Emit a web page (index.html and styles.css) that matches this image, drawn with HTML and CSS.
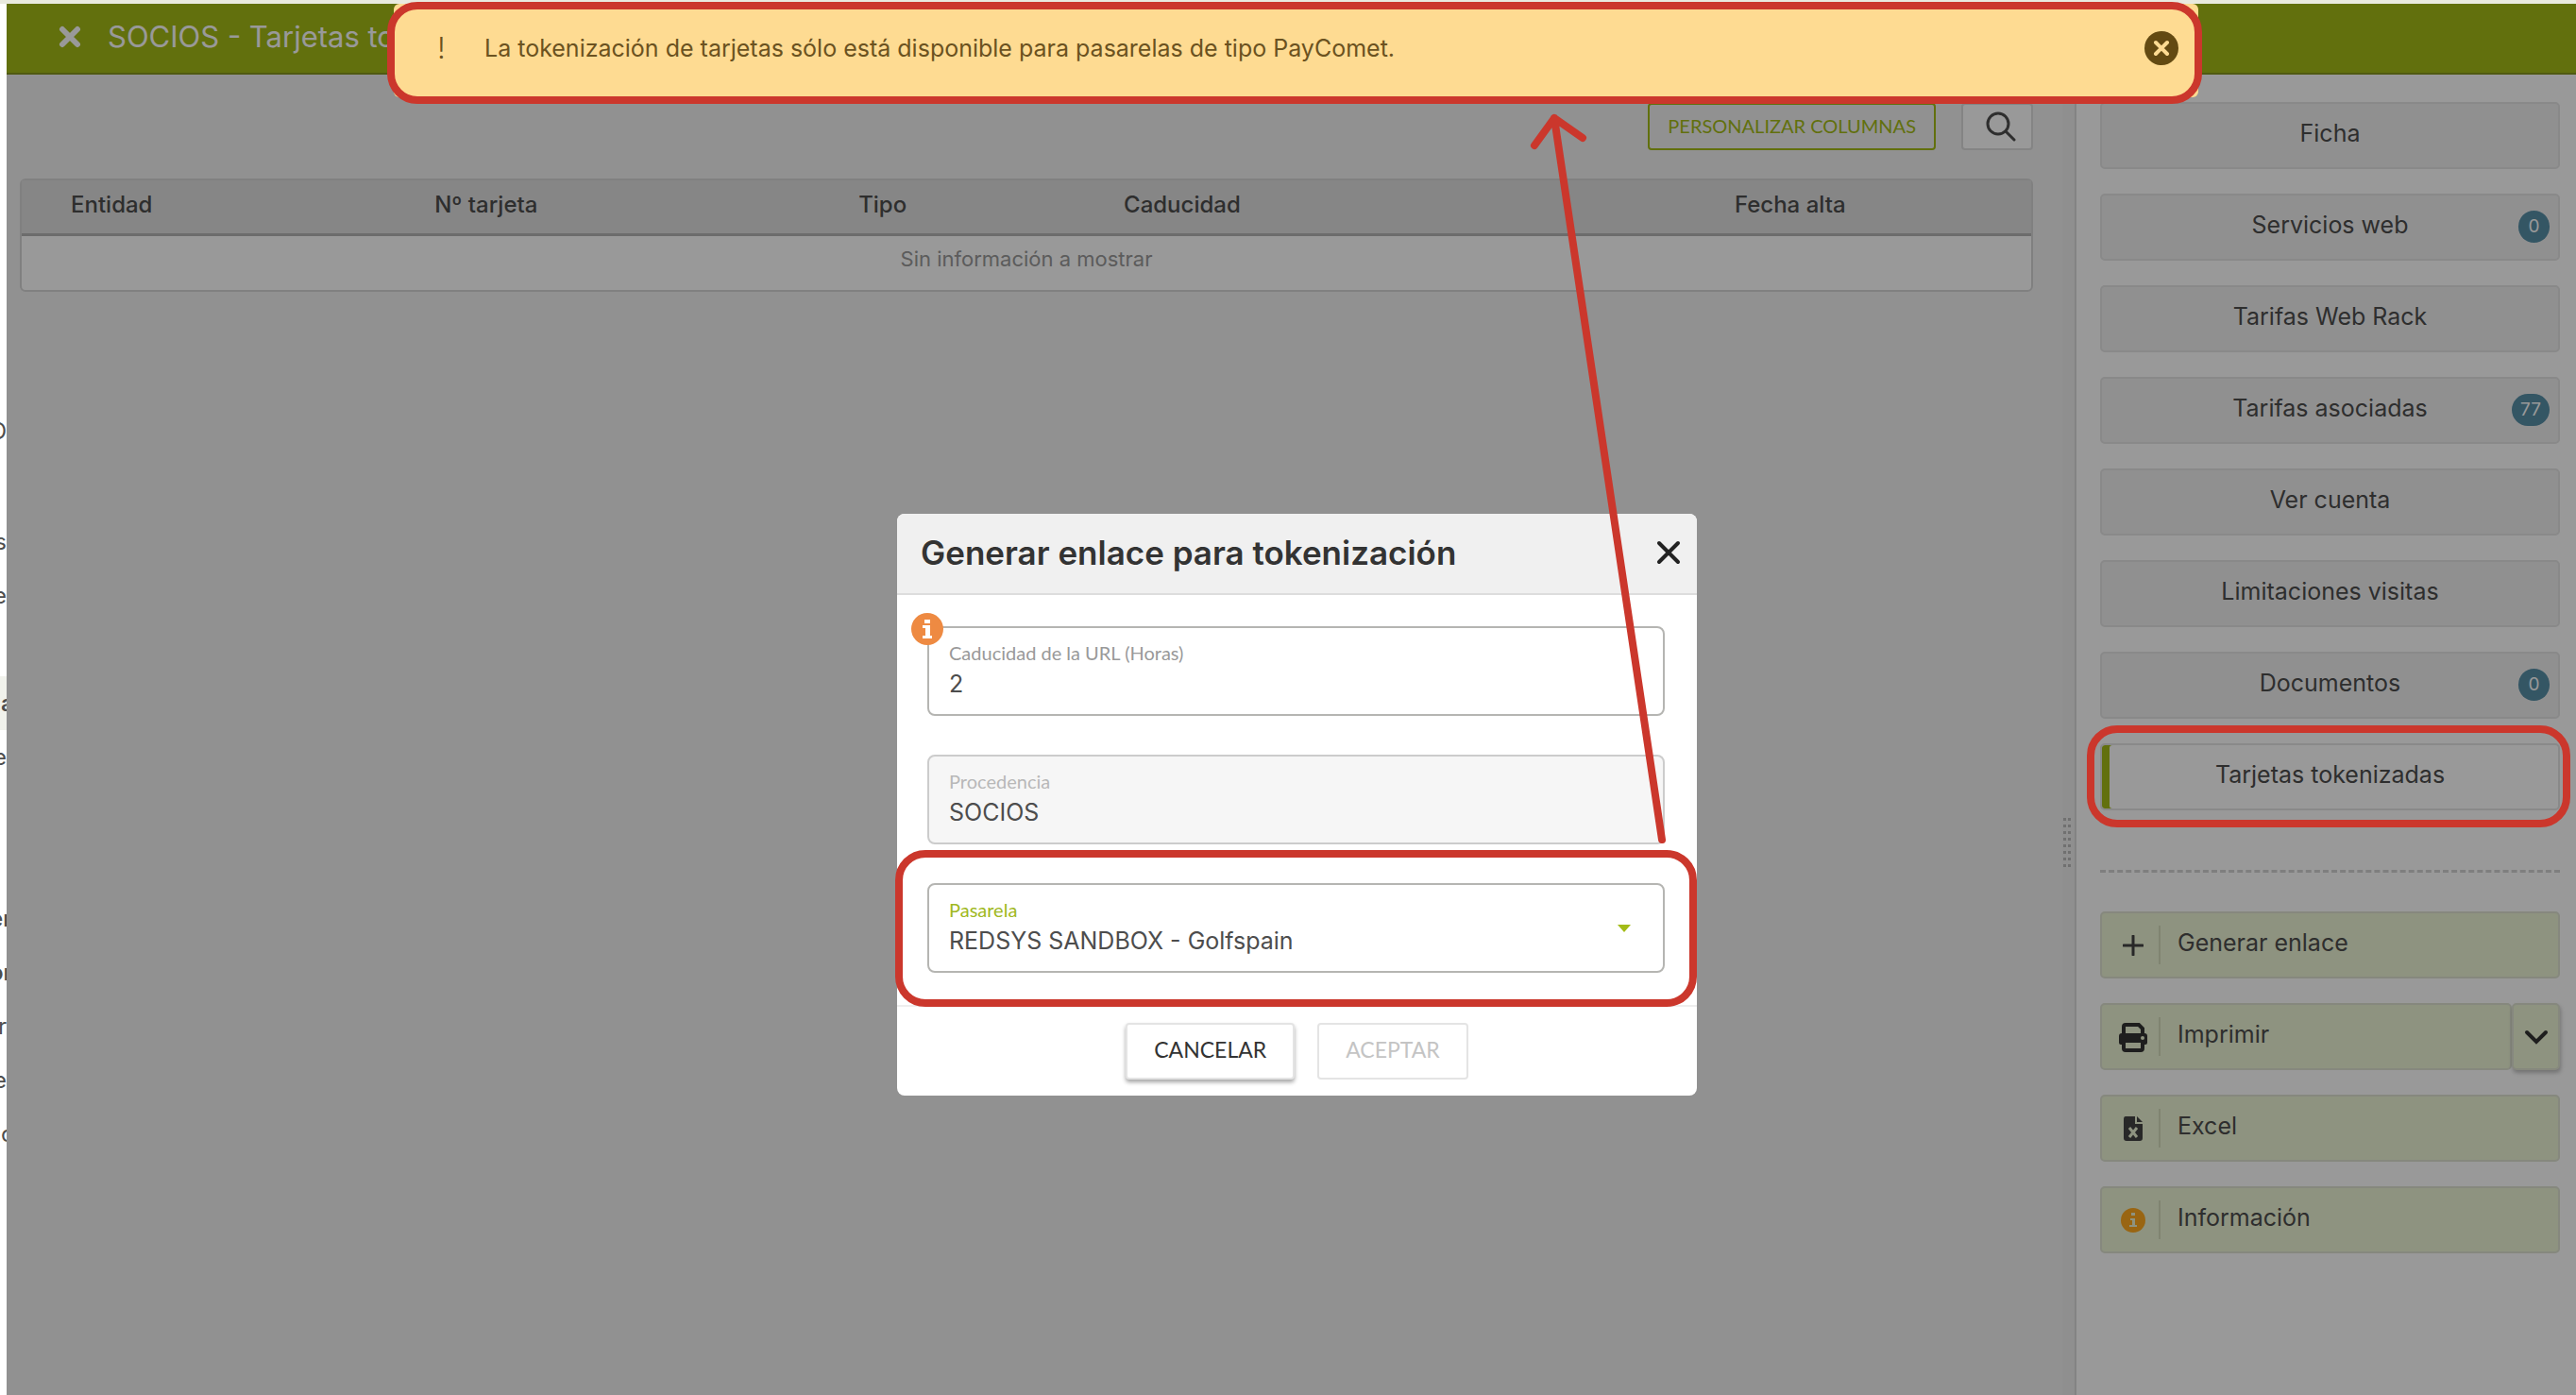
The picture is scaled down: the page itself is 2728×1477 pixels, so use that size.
FILE: index.html
```html
<!DOCTYPE html>
<html lang="es">
<head>
    <meta charset="utf-8">
    <title>SOCIOS - Tarjetas tokenizadas</title>
    <link rel="stylesheet" href="styles.css">
</head>
<body>
    <!-- menú lateral, casi todo queda tapado -->
    <div class="menu">
        <div class="menu-title">O</div>
        <div class="menu-item">s</div>
        <div class="menu-item">e</div>
        <div class="menu-item"></div>
        <div class="menu-item start active">a</div>
        <div class="menu-item">e</div>
        <div class="menu-item"></div>
        <div class="menu-item"></div>
        <div class="menu-item cut bold">er</div>
        <div class="menu-item cut bold">or</div>
        <div class="menu-item">r</div>
        <div class="menu-item">e</div>
        <div class="menu-item start">c</div>
    </div>

    <div class="app">
        <header class="header">
            <button type="button" class="icon-btn" aria-label="Cerrar">
                <svg width="24" height="24" viewBox="0 0 24 24"><path d="M4 4L20 20M20 4L4 20" stroke="#fff" stroke-width="6" stroke-linecap="round"/></svg>
            </button>
            <h1>SOCIOS - Tarjetas tokenizadas</h1>
        </header>

        <div class="content">
            <main class="main">
                <div class="toolbar">
                    <button type="button" class="btn-columns">PERSONALIZAR COLUMNAS</button>
                    <button type="button" class="btn-search" aria-label="Buscar">
                        <svg width="32" height="32" viewBox="0 0 32 32" fill="none" stroke="#4d4d4d" stroke-width="3" stroke-linecap="round"><circle cx="13" cy="13" r="11"/><path d="M21 21L30 30"/></svg>
                    </button>
                </div>
                <table class="table">
                    <thead>
                        <tr>
                            <th class="c-entidad">Entidad</th>
                            <th class="c-tarjeta">Nº tarjeta</th>
                            <th class="c-tipo">Tipo</th>
                            <th class="c-caducidad">Caducidad</th>
                            <th>Fecha alta</th>
                        </tr>
                    </thead>
                    <tbody>
                        <tr><td colspan="5">Sin información a mostrar</td></tr>
                    </tbody>
                </table>
            </main>

            <div class="splitter"><div class="grip"></div></div>

            <aside class="panel">
                <nav class="tabs">
                    <button type="button" class="tab">Ficha</button>
                    <button type="button" class="tab">Servicios web<span class="badge">0</span></button>
                    <button type="button" class="tab">Tarifas Web Rack</button>
                    <button type="button" class="tab">Tarifas asociadas<span class="badge">77</span></button>
                    <button type="button" class="tab">Ver cuenta</button>
                    <button type="button" class="tab">Limitaciones visitas</button>
                    <button type="button" class="tab">Documentos<span class="badge">0</span></button>
                    <button type="button" class="tab selected">Tarjetas tokenizadas</button>
                </nav>
                <hr class="separator">
                <div class="actions">
                    <button type="button" class="action">
                        <span class="action-icon"><svg width="22" height="22" viewBox="0 0 22 22"><path d="M11 1V21M1 11H21" stroke="#444" stroke-width="3" stroke-linecap="round"/></svg></span>
                        <span class="action-text">Generar enlace</span>
                    </button>
                    <div class="split">
                        <button type="button" class="action">
                            <span class="action-icon"><svg width="32" height="32" viewBox="0 0 32 32"><path d="M6 12V5Q6 3 8 3H22L26 7V12" fill="none" stroke="#333" stroke-width="4"/><path d="M4 12H28Q31 12 31 15V22Q31 24 29 24H3Q1 24 1 22V15Q1 12 4 12Z" fill="#333"/><path d="M6 20H26V28Q26 30 24 30H8Q6 30 6 28Z" fill="#edf5d5" stroke="#333" stroke-width="4"/><circle cx="26" cy="17" r="2" fill="#edf5d5"/></svg></span>
                            <span class="action-text">Imprimir</span>
                        </button>
                        <button type="button" class="action more" aria-label="Más opciones">
                            <svg width="26" height="16" viewBox="0 0 26 16"><path d="M3 3L13 13L23 3" fill="none" stroke="#333" stroke-width="4" stroke-linecap="round"/></svg>
                        </button>
                    </div>
                    <button type="button" class="action">
                        <span class="action-icon"><svg width="22" height="28" viewBox="0 0 22 28"><path d="M3 1H13V9H21V24Q21 27 18 27H4Q1 27 1 24V4Q1 1 3 1Z" fill="#444"/><path d="M15 1L21 7H15Z" fill="#444"/><path d="M7 13L15 23M15 13L7 23" stroke="#edf5d5" stroke-width="3"/></svg></span>
                        <span class="action-text">Excel</span>
                    </button>
                    <button type="button" class="action">
                        <span class="action-icon"><svg width="28" height="28" viewBox="0 0 28 28"><circle cx="14" cy="14" r="13" fill="#ffa81f"/><path d="M12 6H16V9H12ZM11 12H16V19H18V21H10V19H13V14H11Z" fill="#edf5d5"/></svg></span>
                        <span class="action-text">Información</span>
                    </button>
                </div>
            </aside>
        </div>
        <div class="overlay"></div>
    </div>

    <div class="alert" role="alert">
        <span class="alert-mark">!</span>
        <span class="alert-text">La tokenización de tarjetas sólo está disponible para pasarelas de tipo PayComet.</span>
        <button type="button" class="icon-btn" aria-label="Cerrar aviso">
            <svg width="36" height="36" viewBox="0 0 36 36"><circle cx="18" cy="18" r="18" fill="#634a12"/><path d="M12 12L24 24M24 12L12 24" stroke="#fedb92" stroke-width="4" stroke-linecap="round"/></svg>
        </button>
    </div>

    <form class="modal">
        <div class="modal-header">
            <h2>Generar enlace para tokenización</h2>
            <button type="button" class="icon-btn" aria-label="Cerrar ventana">
                <svg width="26" height="26" viewBox="0 0 26 26"><path d="M3 3L23 23M23 3L3 23" stroke="#222" stroke-width="4" stroke-linecap="round"/></svg>
            </button>
        </div>
        <div class="modal-body">
            <div class="field">
                <svg class="info" width="34" height="34" viewBox="0 0 34 34"><circle cx="17" cy="17" r="17" fill="#ee8a42"/><path d="M14 7H20V11H14ZM12 13H20V24H22V27H12V24H15V16H12Z" fill="#fff"/></svg>
                <label for="caducidad">Caducidad de la URL (Horas)</label>
                <input type="text" id="caducidad" name="caducidad" value="2">
            </div>
            <div class="field disabled">
                <label for="procedencia">Procedencia</label>
                <input type="text" id="procedencia" name="procedencia" value="SOCIOS" disabled>
            </div>
            <div class="field pasarela">
                <label for="pasarela">Pasarela</label>
                <select id="pasarela" name="pasarela">
                    <option>REDSYS SANDBOX - Golfspain</option>
                </select>
            </div>
        </div>
        <div class="modal-footer">
            <button type="button" class="btn">CANCELAR</button>
            <button type="submit" class="btn" disabled>ACEPTAR</button>
        </div>
    </form>

    <!-- flecha de la pasarela al aviso -->
    <svg class="arrow" viewBox="1610 110 160 790"><path d="M1760 889L1646 125M1625 154L1646 125L1676 146" fill="none" stroke="#cb372c" stroke-width="8" stroke-linecap="round" stroke-linejoin="round"/></svg>
</body>
</html>
```
FILE: styles.css
```css
* {
    box-sizing: border-box;
}

body {
    margin: 0;
    padding-top: 4px;
    display: flex;
    position: relative;
    min-height: 100vh;
    background: #e9eadf;
    font-family: Inter, "Liberation Sans", sans-serif;
    font-size: 25px;
    color: #4d4d4d;
}

button, input, select {
    font: inherit;
    color: inherit;
}

h1, h2 {
    margin: 0;
}

.icon-btn {
    display: flex;
    padding: 0;
    border: 0;
    background: none;
}

/* menu lateral */
.menu {
    width: 7px;
    flex: none;
    overflow: hidden;
    padding-top: 424px;
    background: #fff;
    font-size: 24px;
}

.menu-title, .menu-item {
    display: flex;
    align-items: center;
    justify-content: flex-end;
    height: 57px;
}

.menu-title {
    margin-bottom: 60px;
}

.menu-item.start {
    justify-content: flex-start;
    padding-left: 1px;
}

.menu-item.cut {
    display: block;
    line-height: 57px;
    text-indent: -11px;
}

.menu-item.bold {
    font-weight: 600;
}

.menu-item.active {
    background: #f1f2ec;
    font-weight: 600;
}

.app {
    position: relative;
    flex: 1;
    display: flex;
    flex-direction: column;
}

.overlay {
    position: absolute;
    inset: 0;
    background: rgba(0, 0, 0, 0.4);
}

.header {
    display: flex;
    align-items: center;
    gap: 28px;
    height: 75px;
    padding: 0 55px 4px;
    background: #a3bb17;
    border-bottom: 2px solid #85971d;
    color: #fff;
}

.header h1 {
    font-size: 31px;
    font-weight: 400;
}

.content {
    flex: 1;
    display: grid;
    grid-template-columns: 1fr 15px 529px;
}

.main {
    padding: 30px 31px 0 14px;
    background: #f2f2f2;
}

.toolbar {
    display: flex;
    justify-content: flex-end;
    gap: 27px;
    margin-bottom: 30px;
}

.btn-columns {
    height: 50px;
    padding: 0 19px 2px;
    border: 2px solid #a3bb17;
    border-radius: 4px;
    background: none;
    color: #a3bb17;
    font-family: Lato, sans-serif;
    font-size: 20px;
}

.btn-search {
    display: flex;
    align-items: center;
    justify-content: center;
    width: 76px;
    height: 50px;
    padding: 0 0 0 8px;
    border: 2px solid #dcdcdc;
    border-radius: 4px;
    background: #fff;
}

.table {
    width: 100%;
    table-layout: fixed;
    border-collapse: separate;
    border-spacing: 0;
    border: 2px solid #d6d6d6;
    border-radius: 6px;
    background: #fff;
}

.table th {
    height: 59px;
    padding: 0 0 5px 52px;
    background: #dfdfdf;
    border-bottom: 3px solid #b4b4b4;
    font-size: 24px;
    font-weight: 500;
    text-align: left;
}

.table td {
    height: 57px;
    padding: 0 0 10px;
    color: #999;
    font-size: 22px;
    text-align: center;
}

.c-entidad {
    width: 18.1%;
}

.c-tarjeta {
    width: 21.1%;
}

.c-tipo {
    width: 13.2%;
}

.c-caducidad {
    width: 30.4%;
}

.splitter {
    display: flex;
    align-items: center;
    padding-top: 226px;
    background: #eee;
    border-right: 2px solid #dadada;
}

.grip {
    width: 10px;
    height: 54px;
    background: radial-gradient(circle, #bbb 2px, transparent 2px) 0 0 / 5px 7px;
}

.panel {
    padding: 29px 17px 0 25px;
    background: #fff;
}

.tabs, .actions {
    display: flex;
    flex-direction: column;
    gap: 26px;
}

.tab {
    position: relative;
    height: 71px;
    padding: 0 0 5px;
    border: 2px solid #e4e4e4;
    border-radius: 5px;
    background: #f1f1f1;
}

.tab.selected {
    background: #fff;
    box-shadow: inset 8px 0 #a3bb17;
}

.badge {
    position: absolute;
    top: 16px;
    right: 9px;
    min-width: 33px;
    padding: 0 9px;
    border-radius: 17px;
    background: #578fa7;
    color: #fff;
    font-size: 19px;
    line-height: 34px;
    text-align: center;
}

.separator {
    margin: 63px 0 41px;
    border: 0;
    border-top: 3px dashed #d4d4d4;
}

.action {
    flex: 1;
    display: flex;
    align-items: center;
    height: 71px;
    padding: 0 5px;
    border: 2px solid #dfe3d2;
    border-radius: 5px;
    background: #edf5d5;
    text-align: left;
}

.actions > .action {
    flex: none;
}

.action-icon {
    display: flex;
    align-items: center;
    justify-content: center;
    width: 57px;
    height: 41px;
    border-right: 2px solid #d5ddbd;
}

.action-text {
    padding: 0 0 5px 18px;
}

.split {
    display: flex;
}

.action.more {
    flex: none;
    width: 51px;
    justify-content: center;
    box-shadow: 1px 3px 4px rgba(0, 0, 0, 0.25);
}

/* aviso */
.alert {
    position: absolute;
    top: 4px;
    left: 417px;
    right: 400px;
    height: 99px;
    display: flex;
    align-items: center;
    padding: 0 21px 6px 46px;
    border-radius: 6px;
    background: #fedb92;
    color: #6b5220;
}

.alert-mark {
    width: 50px;
    font-size: 31px;
    font-weight: 300;
}

.alert-text {
    flex: 1;
}

/* ventana */
.modal {
    position: absolute;
    top: 544px;
    left: 950px;
    width: 847px;
    border-radius: 8px;
    background: #fff;
}

.modal-header {
    display: flex;
    align-items: center;
    justify-content: space-between;
    height: 86px;
    padding: 0 17px 2px 25px;
    border-bottom: 2px solid #ddd;
    border-radius: 8px 8px 0 0;
    background: #f0f0f0;
    color: #333;
}

.modal-header h2 {
    font-size: 35px;
    font-weight: 600;
}

.modal-body {
    display: flex;
    flex-direction: column;
    gap: 41px;
    padding: 33px 34px 34px 32px;
}

.field {
    position: relative;
    display: flex;
    flex-direction: column;
    height: 95px;
    padding: 13px 21px 0;
    border: 2px solid #b5b5b2;
    border-radius: 8px;
}

.field label {
    color: #999;
    font-family: Lato, sans-serif;
    font-size: 20px;
    line-height: 26px;
}

.field input, .field select {
    width: 100%;
    height: 39px;
    padding: 0;
    border: 0;
    outline: 0;
    background: none;
    appearance: none;
    opacity: 1;
}

.field.disabled {
    border-color: #ccc;
    background: #f6f6f6;
}

.field.disabled label {
    color: #b8b8b8;
}

.pasarela label {
    color: #a0b822;
}

.pasarela::before {
    content: "";
    position: absolute;
    top: 42px;
    right: 34px;
    border: 7px solid transparent;
    border-top: 8px solid #a3bb17;
    border-bottom: 0;
}

.info {
    position: absolute;
    top: -16px;
    left: -19px;
}

.modal-footer {
    display: flex;
    justify-content: center;
    gap: 24px;
    padding: 17px 0;
    border-top: 2px solid #eee;
}

.btn {
    height: 60px;
    padding: 0 28px 4px;
    border: 2px solid #e4e4e4;
    border-radius: 4px;
    background: #fff;
    box-shadow: 0 3px 4px rgba(0, 0, 0, 0.35);
    color: #333;
    font-family: Lato, sans-serif;
    font-size: 23px;
}

.btn:disabled {
    box-shadow: none;
    color: #c4c4c4;
}

/* marcos rojos */
.alert::after, .pasarela::after, .tab.selected::after {
    content: "";
    position: absolute;
    z-index: 1;
    border: 8px solid #cb372c;
    border-radius: 32px;
    pointer-events: none;
}

.alert::after {
    inset: -2px -4px -7px -7px;
}

.pasarela::after {
    inset: -37px -36px -38px;
}

.tab.selected::after {
    inset: -21px -13px -20px -16px;
}

.arrow {
    position: absolute;
    z-index: 1;
    top: 110px;
    left: 1610px;
    width: 160px;
    height: 790px;
    pointer-events: none;
}
```
